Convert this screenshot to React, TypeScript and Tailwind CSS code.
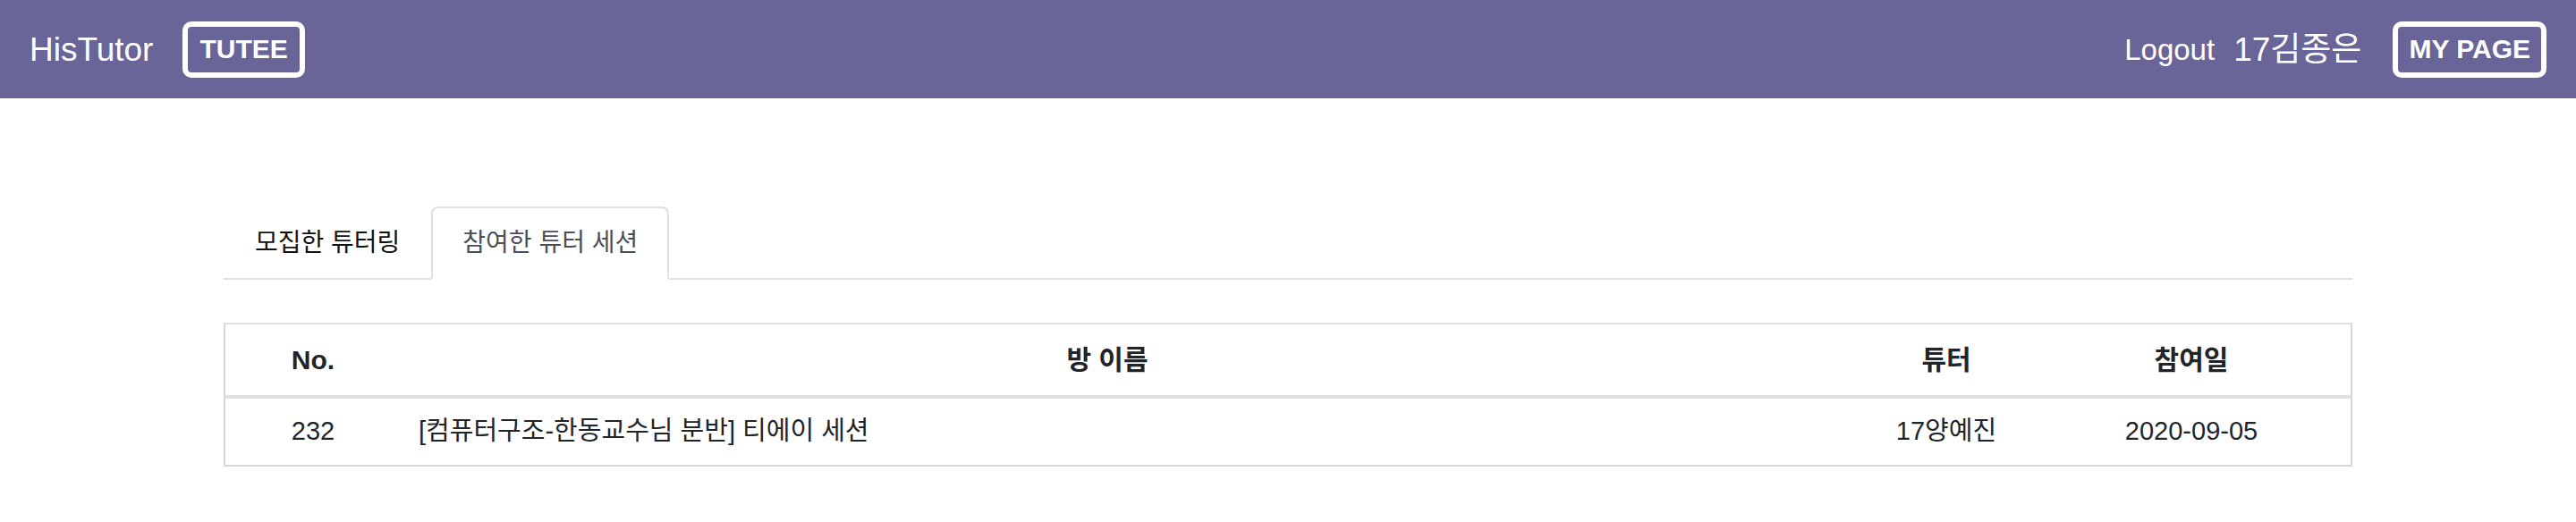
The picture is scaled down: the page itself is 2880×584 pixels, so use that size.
const font = { fontFamily: '"Liberation Sans", "Noto Sans CJK KR", sans-serif' };

function NavBar() {
  return (
    <nav className="flex h-[110px] items-center justify-between bg-[#696598] px-[33px] text-white">
      <div className="flex items-center gap-[33px]">
        <span className="text-[37px] leading-none">HisTutor</span>
        <span className="flex h-[63px] items-center rounded-[10px] border-[6px] border-white px-[13px] text-[30px] font-bold leading-none">
          TUTEE
        </span>
      </div>
      <div className="flex items-center">
        <span className="text-[33px] leading-none">Logout</span>
        <span className="ml-[21px] text-[37px] leading-none">17김종은</span>
        <span className="ml-[35px] flex h-[63px] items-center rounded-[10px] border-[6px] border-white px-[12px] text-[30px] font-bold leading-none">
          MY PAGE
        </span>
      </div>
    </nav>
  );
}

function Tabs() {
  return (
    <div className="flex border-b-2 border-[#dee2e6]">
      <div className="-mb-[2px] border-2 border-transparent px-[33px] py-[15px] text-[28px] leading-[48px] text-[#111]">
        모집한 튜터링
      </div>
      <div className="-mb-[2px] rounded-t-[8px] border-2 border-[#dee2e6] border-b-white bg-white px-[33px] py-[15px] text-[28px] leading-[48px] text-[#495057]">
        참여한 튜터 세션
      </div>
    </div>
  );
}

const rows = [
  { no: 232, name: "[컴퓨터구조-한동교수님 분반] 티에이 세션", tutor: "17양예진", date: "2020-09-05" },
];

function SessionTable() {
  return (
    <div className="mt-[48px] border-2 border-[#d6d6d6] border-t-[#dee2e6] text-[#212529]">
      <div className="grid h-[83px] grid-cols-[196px_1580px_296px_1fr] items-center border-b-4 border-[#dee2e6] text-[30px] font-bold">
        <div className="text-center">No.</div>
        <div className="text-center">방 이름</div>
        <div className="text-center">튜터</div>
        <div className="pr-[52px] text-center">참여일</div>
      </div>
      {rows.map((r) => (
        <div
          key={r.no}
          className="grid h-[74px] grid-cols-[196px_1580px_296px_1fr] items-center text-[29px]"
        >
          <div className="text-center">{r.no}</div>
          <div className="pl-[20px]">{r.name}</div>
          <div className="text-center">{r.tutor}</div>
          <div className="pr-[52px] text-center">{r.date}</div>
        </div>
      ))}
    </div>
  );
}

export default function App() {
  return (
    <div className="min-h-[584px] bg-white" style={font}>
      <NavBar />
      <main className="mx-auto w-[2380px] pt-[121px]">
        <Tabs />
        <SessionTable />
      </main>
    </div>
  );
}
